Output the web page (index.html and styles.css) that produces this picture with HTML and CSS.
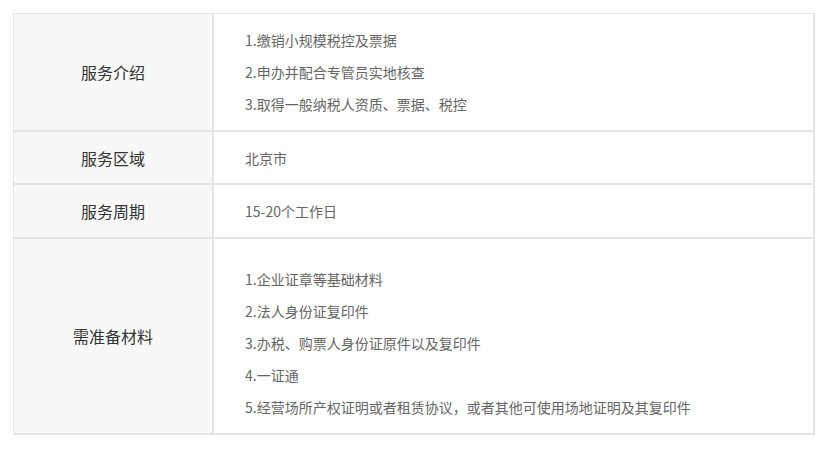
FILE: index.html
```html
<!DOCTYPE html>
<html lang="zh-CN">
<head>
<meta charset="utf-8">
<title>服务详情</title>
<link rel="stylesheet" href="styles.css">
</head>
<body>
<div class="page">
  <table class="info">
    <tr>
      <th class="label">服务介绍</th>
      <td class="content pad-std">
        <p>1.缴销小规模税控及票据</p>
        <p>2.申办并配合专管员实地核查</p>
        <p>3.取得一般纳税人资质、票据、税控</p>
      </td>
    </tr>
    <tr>
      <th class="label">服务区域</th>
      <td class="content pad-short">
        <p>北京市</p>
      </td>
    </tr>
    <tr>
      <th class="label">服务周期</th>
      <td class="content pad-std">
        <p>15-20个工作日</p>
      </td>
    </tr>
    <tr>
      <th class="label">需准备材料</th>
      <td class="content pad-tall">
        <p>1.企业证章等基础材料</p>
        <p>2.法人身份证复印件</p>
        <p>3.办税、购票人身份证原件以及复印件</p>
        <p>4.一证通</p>
        <p>5.经营场所产权证明或者租赁协议，或者其他可使用场地证明及其复印件</p>
      </td>
    </tr>
  </table>
</div>
</body>
</html>
```

FILE: styles.css
```css
html, body {
  margin: 0;
  padding: 0;
  background: #ffffff;
}

.page {
  padding: 13px 0 0 13px;
  font-family: "Microsoft YaHei", "Noto Sans CJK SC", "Noto Sans", sans-serif;
}

.info {
  width: 802px;
  border-collapse: separate;
  border-spacing: 0;
  border-top: 1px solid #e5e5e5;
  border-left: 1px solid #e5e5e5;
  table-layout: fixed;
}

.info th,
.info td {
  border-right: 2px solid #e5e5e5;
  border-bottom: 2px solid #e5e5e5;
}

.label {
  width: 198px;
  background: #f8f8f8;
  color: #333333;
  font-size: 16px;
  font-weight: normal;
  text-align: center;
  vertical-align: middle;
  padding: 0;
}

.content {
  background: #ffffff;
  color: #666666;
  font-size: 14px;
  line-height: 32px;
  text-align: left;
  vertical-align: top;
  padding: 10px 0 10px 31px;
}

.content p {
  margin: 0;
}

.pad-short {
  padding-top: 10px;
  padding-bottom: 9px;
}

.pad-tall {
  padding-top: 24px;
  padding-bottom: 10px;
}
```
